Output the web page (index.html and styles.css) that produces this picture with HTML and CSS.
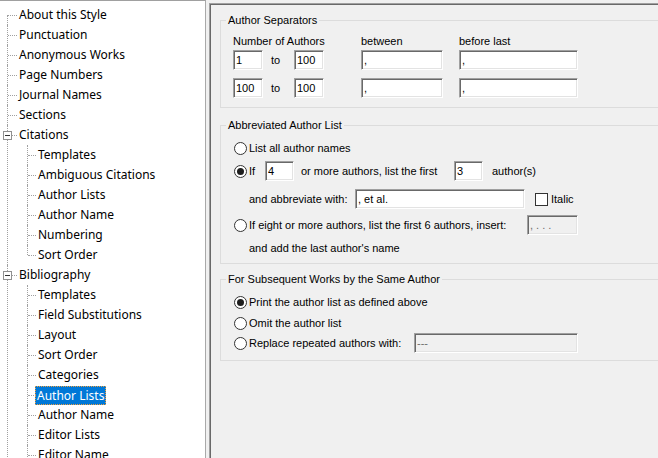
FILE: index.html
```html
<!DOCTYPE html>
<html>
<head>
<meta charset="utf-8">
<link rel="stylesheet" href="styles.css">
</head>
<body>
<div class="tree-pane">
  <ul class="tree">
    <li class="first"><div class="row">About this Style</div></li>
    <li><div class="row">Punctuation</div></li>
    <li><div class="row">Anonymous Works</div></li>
    <li><div class="row">Page Numbers</div></li>
    <li><div class="row">Journal Names</div></li>
    <li><div class="row">Sections</div></li>
    <li>
      <div class="row has-toggle"><span class="toggle"></span>Citations</div>
      <ul class="sub">
        <li><div class="row">Templates</div></li>
        <li><div class="row">Ambiguous Citations</div></li>
        <li><div class="row">Author Lists</div></li>
        <li><div class="row">Author Name</div></li>
        <li><div class="row">Numbering</div></li>
        <li class="last"><div class="row">Sort Order</div></li>
      </ul>
    </li>
    <li>
      <div class="row has-toggle"><span class="toggle"></span>Bibliography</div>
      <ul class="sub">
        <li><div class="row">Templates</div></li>
        <li><div class="row">Field Substitutions</div></li>
        <li><div class="row">Layout</div></li>
        <li><div class="row">Sort Order</div></li>
        <li><div class="row">Categories</div></li>
        <li><div class="row"><span class="sel">Author Lists</span></div></li>
        <li><div class="row">Author Name</div></li>
        <li><div class="row">Editor Lists</div></li>
        <li><div class="row">Editor Name</div></li>
      </ul>
    </li>
  </ul>
</div>

<div class="panel">
  <fieldset class="group g1">
    <legend>Author Separators</legend>
    <div class="body">
      <div class="labels">
        <span class="l-num">Number of Authors</span>
        <span class="l-between">between</span>
        <span>before last</span>
      </div>
      <div class="sep-row">
        <input class="field w30" value="1" readonly>
        <span class="to">to</span>
        <input class="field w30" value="100" readonly>
        <input class="field w-between" value="," readonly>
        <input class="field w-last" value="," readonly>
      </div>
      <div class="sep-row second">
        <input class="field w30" value="100" readonly>
        <span class="to">to</span>
        <input class="field w30" value="100" readonly>
        <input class="field w-between" value="," readonly>
        <input class="field w-last" value="," readonly>
      </div>
    </div>
  </fieldset>

  <fieldset class="group g2">
    <legend>Abbreviated Author List</legend>
    <div class="body">
      <div class="opt r1"><span class="radio"></span><span>List all author names</span></div>
      <div class="opt r2">
        <span class="radio on"></span><span class="if">If</span>
        <input class="field w29" value="4" readonly>
        <span class="more">or more authors, list the first</span>
        <input class="field w29" value="3" readonly>
        <span class="authors">author(s)</span>
      </div>
      <div class="opt r3 indent">
        <span class="abbr">and abbreviate with:</span>
        <input class="field w-abbr" value=", et al." readonly>
        <span class="check"></span><span class="italic">Italic</span>
      </div>
      <div class="opt r4">
        <span class="radio"></span><span class="eight">If eight or more authors, list the first 6 authors, insert:</span>
        <input class="field w-ins" value=", . . ." disabled>
      </div>
      <div class="opt r5 indent"><span>and add the last author's name</span></div>
    </div>
  </fieldset>

  <fieldset class="group g3">
    <legend>For Subsequent Works by the Same Author</legend>
    <div class="body">
      <div class="opt s1"><span class="radio on"></span><span>Print the author list as defined above</span></div>
      <div class="opt s2"><span class="radio"></span><span>Omit the author list</span></div>
      <div class="opt s3">
        <span class="radio"></span><span class="replace">Replace repeated authors with:</span>
        <input class="field w-rep" value="---" disabled>
      </div>
    </div>
  </fieldset>
</div>
</body>
</html>
```
FILE: styles.css
```css
html, body {
  margin: 0;
  padding: 0;
}

body {
  width: 658px;
  height: 458px;
  overflow: hidden;
  display: flex;
  align-items: flex-start;
  background: #f0f0f0;
  font-family: "Liberation Sans", Arial, sans-serif;
  font-size: 11px;
  color: #000;
}

/* ---------- tree ---------- */
.tree-pane {
  flex: none;
  width: 205px;
  height: 457px;
  background: #fff;
  border-top: 1px solid #a0a0a0;
  border-right: 1px solid #a9a9a9;
  overflow: hidden;
  font-family: "Noto Sans", "Open Sans", sans-serif;
  font-size: 12px;
  color: #000;
}

.tree,
.sub {
  list-style: none;
  margin: 0;
  padding: 0;
}

.tree {
  padding-top: 4px;
}

.tree li {
  position: relative;
}

.tree > li::before {
  content: "";
  position: absolute;
  left: 7px;
  top: 0;
  bottom: 0;
  border-left: 1px dotted #a0a0a0;
}

.tree > li.first::before {
  top: 10px;
}

.sub > li::before {
  content: "";
  position: absolute;
  left: 27px;
  top: 0;
  bottom: 0;
  border-left: 1px dotted #a0a0a0;
}

.sub > li.last::before {
  bottom: auto;
  height: 10px;
}

.row {
  position: relative;
  height: 20px;
  line-height: 20px;
  padding-left: 19px;
  white-space: nowrap;
}

.row::before {
  content: "";
  position: absolute;
  left: 8px;
  top: 10px;
  width: 9px;
  border-top: 1px dotted #a0a0a0;
}

.row.has-toggle::before {
  left: 12px;
  width: 5px;
}

.sub .row {
  padding-left: 38px;
}

.sub .row::before {
  left: 28px;
  width: 8px;
}

.toggle {
  position: absolute;
  left: 3px;
  top: 6px;
  width: 9px;
  height: 9px;
  box-sizing: border-box;
  border: 1px solid #919191;
  background: #fff;
  z-index: 1;
}

.toggle::after {
  content: "";
  position: absolute;
  left: 1px;
  top: 3px;
  width: 5px;
  height: 1px;
  background: #333;
}

.sel {
  display: inline-block;
  vertical-align: top;
  margin: 1px 0 0 -3px;
  padding: 0 1px;
  line-height: 17px;
  background: #0078d7;
  color: #fff;
  border: 1px dotted #f0a040;
}

/* ---------- panel ---------- */
.panel {
  flex: none;
  box-sizing: border-box;
  width: 460px;
  height: 455px;
  margin: 3px 0 0 3px;
  padding: 9px 0 0 10px;
  border-top: 1px solid #a0a0a0;
  border-left: 1px solid #a0a0a0;
  box-shadow: inset 1px 1px 0 #696969;
}

.group {
  margin: 0;
  padding: 0;
  min-width: 0;
  border: 1px solid #dcdcdc;
}

.group legend {
  margin-left: 5px;
  padding: 0 2px;
  line-height: 15px;
  font-size: 11px;
}

.g2 {
  margin-top: 10px;
}

.g3 {
  margin-top: 8px;
}

.field {
  box-sizing: border-box;
  height: 20px;
  margin: 0;
  padding: 0 2px;
  border: 1px solid;
  border-color: #a0a0a0 #fff #fff #a0a0a0;
  box-shadow: inset 1px 1px 0 #696969, inset -1px -1px 0 #e3e3e3;
  background: #fff;
  font-family: "Liberation Sans", Arial, sans-serif;
  font-size: 11px;
  color: #000;
  outline: none;
  border-radius: 0;
}

.field:disabled {
  background: #f0f0f0;
  color: #6d6d6d;
}

/* group 1 */
.g1 .body {
  padding: 6px 0 9px 12px;
}

.labels {
  display: flex;
  line-height: 14px;
}

.l-num {
  width: 128px;
}

.l-between {
  width: 98px;
}

.sep-row {
  display: flex;
  align-items: center;
  margin-top: 2px;
}

.sep-row.second {
  margin-top: 8px;
}

.w30 {
  width: 30px;
}

.to {
  box-sizing: border-box;
  width: 31px;
  padding-left: 8px;
}

.w-between {
  width: 82px;
  margin-left: 37px;
}

.w-last {
  width: 119px;
  margin-left: 16px;
}

/* group 2 & 3 */
.g2 .body {
  padding: 5px 0 5px 13px;
}

.g3 .body {
  padding: 5px 0 7px 13px;
}

.opt {
  display: flex;
  align-items: center;
  height: 20px;
  white-space: nowrap;
}

.opt.indent {
  padding-left: 15px;
}

.radio {
  flex: none;
  position: relative;
  box-sizing: border-box;
  width: 13px;
  height: 13px;
  margin-right: 2px;
  border: 1px solid #333;
  border-radius: 50%;
  background: #fff;
}

.radio.on::after {
  content: "";
  position: absolute;
  left: 2px;
  top: 2px;
  width: 7px;
  height: 7px;
  border-radius: 50%;
  background: #1e1e1e;
}

.check {
  flex: none;
  box-sizing: border-box;
  width: 13px;
  height: 13px;
  margin-left: 10px;
  border: 1px solid #333;
  background: #fff;
}

.italic {
  margin-left: 3px;
}

.r2 {
  margin-top: 3px;
}

.r3 {
  margin-top: 8px;
}

.r4 {
  margin-top: 6px;
}

.r5 {
  margin-top: 3px;
}

.if {
  width: 16px;
}

.w29 {
  width: 29px;
}

.more {
  box-sizing: border-box;
  width: 160px;
  padding-left: 7px;
}

.authors {
  margin-left: 9px;
}

.abbr {
  width: 106px;
}

.w-abbr {
  width: 170px;
}

.eight {
  width: 278px;
}

.w-ins {
  width: 51px;
}

.s2 {
  margin-top: 1px;
}

.replace {
  width: 165px;
}

.w-rep {
  width: 164px;
}
```
